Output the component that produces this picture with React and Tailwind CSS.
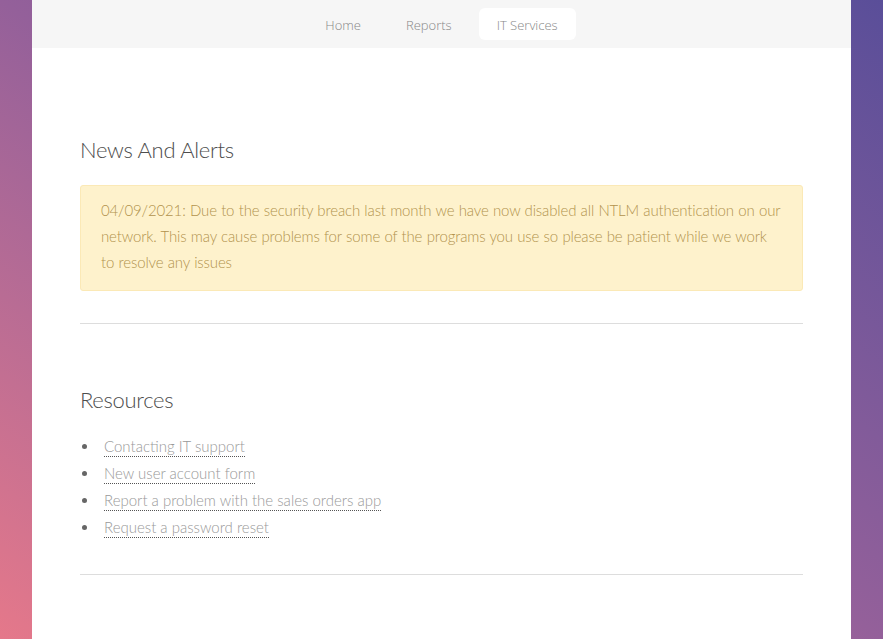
export default function App() {
  const links = [
    "Contacting IT support",
    "New user account form",
    "Report a problem with the sales orders app",
    "Request a password reset",
  ];

  return (
    <div className="min-h-[639px] bg-gradient-to-tr from-[#e5788a] via-[#94609a] to-[#5a4e99] font-['Lato',sans-serif]">
      <div className="mx-auto w-[819px] min-h-[639px] bg-white">
        {/* Nav */}
        <nav className="h-12 bg-[#f6f6f6] flex items-center justify-center gap-[9px] font-['Open_Sans',sans-serif] text-[13px] text-[#888]">
          <a className="h-8 flex items-center pt-[3px] px-[18px] rounded-md font-light">Home</a>
          <a className="h-8 flex items-center pt-[3px] px-[18px] rounded-md font-light">Reports</a>
          <a className="h-8 flex items-center pt-[3px] px-[18px] rounded-md bg-white font-light">IT Services</a>
        </nav>

        <main className="px-12 pt-[86px]">
          {/* News */}
          <h2 className="text-[22px] leading-8 text-[#4d4d4d] font-light tracking-[-0.3px]">News And Alerts</h2>
          <div className="mt-[19px] bg-[#fef2cc] border border-[#fbe9b6] rounded-[3px] px-5 pt-[11px] pb-[15px] text-[15px] leading-[26px] tracking-[-0.15px] [word-spacing:0.42px] text-[#b2934c] font-light">
            04/09/2021: Due to the security breach last month we have now disabled all NTLM authentication on our network. This may cause problems for some of the programs you use so please be patient while we work to resolve any issues
          </div>
          <hr className="mt-8 border-t border-[#ddd]" />

          {/* Resources */}
          <h2 className="mt-[60px] text-[22px] leading-8 text-[#4d4d4d] font-light tracking-[-0.3px]">Resources</h2>
          <ul className="mt-[17px] text-[15px] font-light">
            {links.map((l) => (
              <li key={l} className="h-[27px] flex items-center">
                <span className="ml-[2px] mr-[17px] w-[5px] h-[5px] rounded-full bg-[#666]"></span>
                <a className="text-[#999] border-b border-dotted border-[#555] leading-[20px]">{l}</a>
              </li>
            ))}
          </ul>
          <hr className="mt-[33px] border-t border-[#ddd]" />
        </main>
      </div>
    </div>
  );
}
